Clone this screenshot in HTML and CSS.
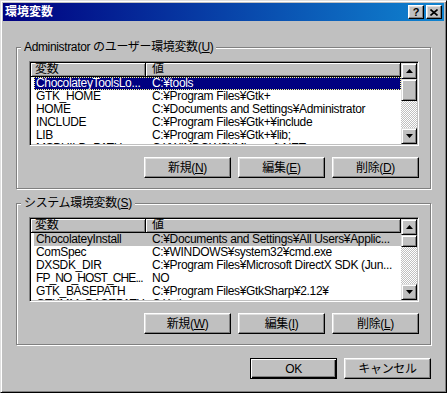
FILE: index.html
```html
<!DOCTYPE html>
<html lang="ja">
<head>
<meta charset="utf-8">
<title>環境変数</title>
<link rel="stylesheet" href="styles.css">
</head>
<body>
<div class="window">
  <div class="titlebar">
    <span class="title">環境変数</span>
    <div class="title-buttons">
      <button class="tbtn help">?</button>
      <button class="tbtn close"><svg width="8" height="7" viewBox="0 0 8 7"><path d="M0.5 0.5 L7.5 6.5 M7.5 0.5 L0.5 6.5" stroke="#000" stroke-width="1.6" fill="none"/></svg></button>
    </div>
  </div>
  <div class="body">
    <fieldset class="group">
      <legend>Administrator のユーザー環境変数(<u>U</u>)</legend>
      <div class="group-inner">
        <div class="list">
          <div class="list-main">
            <div class="header"><div class="hcell c1">変数</div><div class="hcell c2">値</div></div>
            <div class="rows">
              <div class="row selected focused"><span class="cell c1">ChocolateyToolsLo...</span><span class="cell c2">C:¥tools</span></div>
              <div class="row"><span class="cell c1">GTK_HOME</span><span class="cell c2">C:¥Program Files¥Gtk+</span></div>
              <div class="row"><span class="cell c1">HOME</span><span class="cell c2">C:¥Documents and Settings¥Administrator</span></div>
              <div class="row"><span class="cell c1">INCLUDE</span><span class="cell c2">C:¥Program Files¥Gtk+¥include</span></div>
              <div class="row"><span class="cell c1">LIB</span><span class="cell c2">C:¥Program Files¥Gtk+¥lib;</span></div>
              <div class="row"><span class="cell c1">MSBUILD_PATH</span><span class="cell c2">C:¥WINDOWS¥Microsoft.NET</span></div>
            </div>
          </div>
          <div class="scrollbar">
            <div class="sb-btn"><svg width="7" height="4" viewBox="0 0 7 4"><polygon points="3.5,0 7,4 0,4" fill="#000"/></svg></div>
            <div class="sb-thumb thumb-large"></div>
            <div class="sb-track"></div>
            <div class="sb-btn"><svg width="7" height="4" viewBox="0 0 7 4"><polygon points="0,0 7,0 3.5,4" fill="#000"/></svg></div>
          </div>
        </div>
        <div class="btn-row">
          <button class="btn">新規(<u>N</u>)</button>
          <button class="btn">編集(<u>E</u>)</button>
          <button class="btn">削除(<u>D</u>)</button>
        </div>
      </div>
    </fieldset>

    <fieldset class="group">
      <legend>システム環境変数(<u>S</u>)</legend>
      <div class="group-inner">
        <div class="list">
          <div class="list-main">
            <div class="header"><div class="hcell c1">変数</div><div class="hcell c2">値</div></div>
            <div class="rows">
              <div class="row selected inactive"><span class="cell c1">ChocolateyInstall</span><span class="cell c2">C:¥Documents and Settings¥All Users¥Applic...</span></div>
              <div class="row"><span class="cell c1">ComSpec</span><span class="cell c2">C:¥WINDOWS¥system32¥cmd.exe</span></div>
              <div class="row"><span class="cell c1">DXSDK_DIR</span><span class="cell c2">C:¥Program Files¥Microsoft DirectX SDK (Jun...</span></div>
              <div class="row"><span class="cell c1 tight">FP_NO_HOST_CHE...</span><span class="cell c2">NO</span></div>
              <div class="row"><span class="cell c1">GTK_BASEPATH</span><span class="cell c2">C:¥Program Files¥GtkSharp¥2.12¥</span></div>
              <div class="row"><span class="cell c1">GTKMM_BASEPATH</span><span class="cell c2">C:¥gtkmm</span></div>
            </div>
          </div>
          <div class="scrollbar">
            <div class="sb-btn"><svg width="7" height="4" viewBox="0 0 7 4"><polygon points="3.5,0 7,4 0,4" fill="#000"/></svg></div>
            <div class="sb-thumb thumb-small"></div>
            <div class="sb-track"></div>
            <div class="sb-btn"><svg width="7" height="4" viewBox="0 0 7 4"><polygon points="0,0 7,0 3.5,4" fill="#000"/></svg></div>
          </div>
        </div>
        <div class="btn-row">
          <button class="btn">新規(<u>W</u>)</button>
          <button class="btn">編集(<u>I</u>)</button>
          <button class="btn">削除(<u>L</u>)</button>
        </div>
      </div>
    </fieldset>

    <div class="dialog-buttons">
      <button class="btn default">OK</button>
      <button class="btn">キャンセル</button>
    </div>
  </div>
</div>
</body>
</html>
```

FILE: styles.css
```css
* { box-sizing: border-box; }

html, body {
  margin: 0;
  padding: 0;
  background: #c0c0c0;
}

body {
  font-family: "Liberation Sans", "Noto Sans CJK JP", sans-serif;
  font-size: 12px;
  letter-spacing: -0.35px;
  color: #000;
}

.window {
  width: 447px;
  height: 393px;
  background: #c0c0c0;
  border: 1px solid;
  border-color: #dfdfdf #000 #000 #dfdfdf;
  box-shadow: inset 1px 1px #fff, inset -1px -1px #808080;
  padding: 2px;
  display: flex;
  flex-direction: column;
}

.titlebar {
  height: 18px;
  background: linear-gradient(90deg, #000080 0%, #1084d0 100%);
  display: flex;
  align-items: center;
  justify-content: space-between;
  padding: 0 2px 0 2px;
}

.title {
  color: #fff;
  font-weight: bold;
  line-height: 14px;
  letter-spacing: 0;
}

.title-buttons {
  display: flex;
  gap: 2px;
}

.tbtn {
  width: 16px;
  height: 14px;
  padding: 0;
  margin: 0;
  background: #c0c0c0;
  border: 1px solid;
  border-color: #fff #000 #000 #fff;
  box-shadow: inset -1px -1px #808080, inset 1px 1px #dfdfdf;
  display: flex;
  align-items: center;
  justify-content: center;
  font-family: "Liberation Sans", sans-serif;
  font-weight: bold;
  font-size: 11px;
  line-height: 12px;
  color: #000;
}

.body {
  display: flex;
  flex-direction: column;
  padding: 19px 13px 0 13px;
  gap: 7px;
}

.group {
  margin: 0;
  padding: 0;
  min-width: 0;
  border: 1px solid #808080;
  box-shadow: inset 1px 1px #fff, 1px 1px #fff;
}

.group legend {
  margin-left: 4px;
  padding: 0 3px;
  line-height: 14px;
  height: 14px;
  background: #c0c0c0;
}

.group-inner {
  padding: 7px 11px 10px 12px;
  display: flex;
  flex-direction: column;
  gap: 11px;
}

.list {
  height: 85px;
  display: flex;
  background: #fff;
  border: 1px solid;
  border-color: #808080 #fff #fff #808080;
  box-shadow: inset 1px 1px #000, inset -1px -1px #c0c0c0;
  padding: 1px;
}

.list-main {
  flex: 1;
  min-width: 0;
  overflow: hidden;
  display: flex;
  flex-direction: column;
}

.header {
  display: flex;
  height: 14px;
  flex-shrink: 0;
}

.hcell {
  background: #c0c0c0;
  border-right: 1px solid #000;
  border-bottom: 1px solid #000;
  box-shadow: inset 1px 1px #fff, inset -1px -1px #808080;
  line-height: 13px;
  white-space: nowrap;
  overflow: hidden;
}

.hcell.c1 { width: 115px; padding-left: 4px; }
.hcell.c2 { flex: 1; padding-left: 6px; }

.rows {
  display: flex;
  flex-direction: column;
}

.row {
  display: flex;
  height: 13px;
  line-height: 13px;
  margin-left: 3px;
  flex-shrink: 0;
  white-space: nowrap;
}

.cell {
  overflow: hidden;
  white-space: nowrap;
}

.cell.c1 { width: 111px; padding-left: 2px; }
.cell.c2 { flex: 1; padding-left: 7px; }
.cell.tight { letter-spacing: -0.9px; }

.row.selected.focused {
  background: #000080;
  color: #fff;
  outline: 1px dotted #ffff80;
  outline-offset: -1px;
}

.row.selected.inactive {
  background: #c0c0c0;
}

.scrollbar {
  width: 16px;
  flex-shrink: 0;
  display: flex;
  flex-direction: column;
}

.sb-btn {
  height: 16px;
  flex-shrink: 0;
  background: #c0c0c0;
  border: 1px solid;
  border-color: #dfdfdf #000 #000 #dfdfdf;
  box-shadow: inset 1px 1px #fff, inset -1px -1px #808080;
  display: flex;
  align-items: center;
  justify-content: center;
}

.sb-btn svg { display: block; }

.sb-thumb {
  flex-shrink: 0;
  background: #c0c0c0;
  border: 1px solid;
  border-color: #dfdfdf #000 #000 #dfdfdf;
  box-shadow: inset 1px 1px #fff, inset -1px -1px #808080;
}

.thumb-large { height: 22px; }
.thumb-small { height: 12px; }

.sb-track {
  flex: 1;
  background-image: repeating-conic-gradient(#c0c0c0 0% 25%, #fff 0% 50%);
  background-size: 2px 2px;
}

.btn-row, .dialog-buttons {
  display: flex;
  justify-content: flex-end;
  gap: 7px;
}

.dialog-buttons {
  margin-top: 6px;
}

.btn {
  width: 87px;
  height: 21px;
  margin: 0;
  padding: 0;
  background: #c0c0c0;
  border: 1px solid;
  border-color: #fff #000 #000 #fff;
  box-shadow: inset -1px -1px #808080, inset 1px 1px #dfdfdf;
  font-family: "Liberation Sans", "Noto Sans CJK JP", sans-serif;
  font-size: 12px;
  letter-spacing: -0.35px;
  line-height: 14px;
  color: #000;
}

.btn.default {
  border-color: #000;
  box-shadow: inset 1px 1px #fff, inset -1px -1px #000, inset -2px -2px #808080;
}

.btn u { text-underline-offset: 1px; }
```
